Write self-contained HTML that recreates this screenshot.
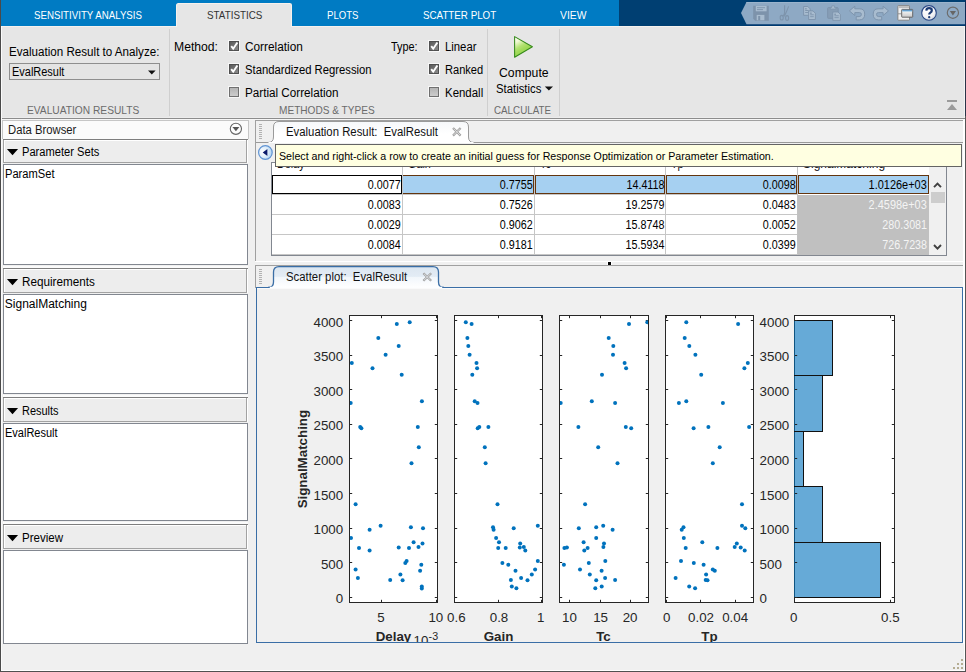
<!DOCTYPE html>
<html><head><meta charset="utf-8"><title>Sensitivity Analysis</title>
<style>
html,body{margin:0;padding:0;}
body{width:966px;height:672px;overflow:hidden;background:#f0f0f0;position:relative;font-family:"Liberation Sans",sans-serif;}
div{box-sizing:border-box;}
svg{position:absolute;left:0;top:0;overflow:visible;}
</style></head><body>
<div style="position:absolute;left:0px;top:0px;width:619px;height:26px;background:#007bc3;"></div>
<div style="position:absolute;left:619px;top:0px;width:347px;height:26px;background:#003f72;"></div>
<div style="position:absolute;left:746px;top:24px;width:220px;height:2px;background:#003a70;"></div>
<div style="position:absolute;left:0px;top:26px;width:966px;height:92px;background:#e6e6e6;"></div>
<div style="position:absolute;left:0px;top:26px;width:966px;height:1px;background:#f5f1ee;"></div>
<div style="position:absolute;left:176px;top:3px;width:116px;height:24px;background:#e6e6e6;border-radius:2.5px 2.5px 0 0;border:1px solid #f7f1ec;border-bottom:none;"></div>
<div style="position:absolute;top:8.19px;height:15px;line-height:15px;font-size:11px;color:#fff;white-space:pre;left:33.50px;transform-origin:0 50%;transform:scaleX(0.8818);">SENSITIVITY ANALYSIS</div>
<div style="position:absolute;top:8.19px;height:15px;line-height:15px;font-size:11px;color:#333;white-space:pre;left:206.50px;transform-origin:0 50%;transform:scaleX(0.8945);">STATISTICS</div>
<div style="position:absolute;top:8.19px;height:15px;line-height:15px;font-size:11px;color:#fff;white-space:pre;left:326.50px;transform-origin:0 50%;transform:scaleX(0.8734);">PLOTS</div>
<div style="position:absolute;top:8.19px;height:15px;line-height:15px;font-size:11px;color:#fff;white-space:pre;left:422.50px;transform-origin:0 50%;transform:scaleX(0.8893);">SCATTER PLOT</div>
<div style="position:absolute;top:8.19px;height:15px;line-height:15px;font-size:11px;color:#fff;white-space:pre;left:560.30px;transform-origin:0 50%;transform:scaleX(0.9391);">VIEW</div>
<svg width="966" height="30"><path d="M741 13 L746.5 2 H965 V24.2 H746.5 Z" fill="#8ea9c4"/></svg>
<div style="position:absolute;top:44.04px;height:17px;line-height:17px;font-size:12px;color:#000;white-space:pre;left:9.30px;transform-origin:0 50%;transform:scaleX(0.9676);">Evaluation Result to Analyze:</div>
<div style="position:absolute;left:9px;top:63px;width:151px;height:17px;background:#e4e4e4;border:1px solid #8e8e8e;"></div>
<div style="position:absolute;top:64.14px;height:17px;line-height:17px;font-size:12px;color:#000;white-space:pre;left:12.30px;transform-origin:0 50%;transform:scaleX(0.9135);">EvalResult</div>
<svg width="966" height="130"><path d="M148 70.6 h7.6 l-3.8 3.8 z" fill="#111"/></svg>
<div style="position:absolute;top:103.29px;height:15px;line-height:15px;font-size:11px;color:#6b6b6b;white-space:pre;left:26.50px;transform-origin:0 50%;transform:scaleX(0.9279);">EVALUATION RESULTS</div>
<div style="position:absolute;top:103.29px;height:15px;line-height:15px;font-size:11px;color:#6b6b6b;white-space:pre;left:278.80px;transform-origin:0 50%;transform:scaleX(0.9174);">METHODS &amp; TYPES</div>
<div style="position:absolute;top:103.29px;height:15px;line-height:15px;font-size:11px;color:#6b6b6b;white-space:pre;left:493.70px;transform-origin:0 50%;transform:scaleX(0.8909);">CALCULATE</div>
<div style="position:absolute;left:169px;top:29px;width:1px;height:87px;background:#cfcfcf;"></div>
<div style="position:absolute;left:487px;top:29px;width:1px;height:87px;background:#cfcfcf;"></div>
<div style="position:absolute;left:559px;top:29px;width:1px;height:87px;background:#cfcfcf;"></div>
<div style="position:absolute;top:39.24px;height:17px;line-height:17px;font-size:12px;color:#000;white-space:pre;left:173.70px;transform-origin:0 50%;transform:scaleX(1.0148);">Method:</div>
<div style="position:absolute;top:39.24px;height:17px;line-height:17px;font-size:12px;color:#000;white-space:pre;left:390.80px;transform-origin:0 50%;transform:scaleX(0.9063);">Type:</div>
<div style="position:absolute;left:229px;top:41px;width:10px;height:10px;background:linear-gradient(135deg,#5c5c5c,#8a8a8a);border:1px solid #505050;box-shadow:0 0 0 1px #f7f7f7;"></div>
<svg width="966" height="130"><path d="M231.2 46.2 l2 2.5 l4.2 -6.2" fill="none" stroke="#fff" stroke-width="1.9"/></svg>
<div style="position:absolute;left:229px;top:64px;width:10px;height:10px;background:linear-gradient(135deg,#5c5c5c,#8a8a8a);border:1px solid #505050;box-shadow:0 0 0 1px #f7f7f7;"></div>
<svg width="966" height="130"><path d="M231.2 69.2 l2 2.5 l4.2 -6.2" fill="none" stroke="#fff" stroke-width="1.9"/></svg>
<div style="position:absolute;left:229px;top:87px;width:10px;height:10px;background:linear-gradient(#b4b4b4,#cdcdcd);border:1px solid #707070;box-shadow:0 0 0 1px #f7f7f7;"></div>
<div style="position:absolute;left:429px;top:41px;width:10px;height:10px;background:linear-gradient(135deg,#5c5c5c,#8a8a8a);border:1px solid #505050;box-shadow:0 0 0 1px #f7f7f7;"></div>
<svg width="966" height="130"><path d="M431.2 46.2 l2 2.5 l4.2 -6.2" fill="none" stroke="#fff" stroke-width="1.9"/></svg>
<div style="position:absolute;left:429px;top:64px;width:10px;height:10px;background:linear-gradient(135deg,#5c5c5c,#8a8a8a);border:1px solid #505050;box-shadow:0 0 0 1px #f7f7f7;"></div>
<svg width="966" height="130"><path d="M431.2 69.2 l2 2.5 l4.2 -6.2" fill="none" stroke="#fff" stroke-width="1.9"/></svg>
<div style="position:absolute;left:429px;top:87px;width:10px;height:10px;background:linear-gradient(#b4b4b4,#cdcdcd);border:1px solid #707070;box-shadow:0 0 0 1px #f7f7f7;"></div>
<div style="position:absolute;top:39.34px;height:17px;line-height:17px;font-size:12px;color:#000;white-space:pre;left:244.80px;transform-origin:0 50%;transform:scaleX(0.9847);">Correlation</div>
<div style="position:absolute;top:62.14px;height:17px;line-height:17px;font-size:12px;color:#000;white-space:pre;left:244.80px;transform-origin:0 50%;transform:scaleX(0.9395);">Standardized Regression</div>
<div style="position:absolute;top:85.04px;height:17px;line-height:17px;font-size:12px;color:#000;white-space:pre;left:244.80px;transform-origin:0 50%;transform:scaleX(0.9735);">Partial Correlation</div>
<div style="position:absolute;top:39.34px;height:17px;line-height:17px;font-size:12px;color:#000;white-space:pre;left:444.50px;transform-origin:0 50%;transform:scaleX(0.9443);">Linear</div>
<div style="position:absolute;top:62.14px;height:17px;line-height:17px;font-size:12px;color:#000;white-space:pre;left:444.50px;transform-origin:0 50%;transform:scaleX(0.9235);">Ranked</div>
<div style="position:absolute;top:85.04px;height:17px;line-height:17px;font-size:12px;color:#000;white-space:pre;left:444.50px;transform-origin:0 50%;transform:scaleX(0.9542);">Kendall</div>
<svg width="966" height="130"><defs><linearGradient id="pg" x1="0" y1="0" x2="0.55" y2="1"><stop offset="0" stop-color="#ffffff"/><stop offset="0.25" stop-color="#f0f9d2"/><stop offset="0.5" stop-color="#b4e272"/><stop offset="0.65" stop-color="#a2db5a"/><stop offset="1" stop-color="#8fd046"/></linearGradient></defs>
<path d="M514.6 36.6 L532.4 46.8 L514.6 57.2 Z" fill="url(#pg)" stroke="#358a1a" stroke-width="1.05" stroke-linejoin="round"/>
<path d="M544.8 86.6 h8.2 l-4.1 3.8 z" fill="#111"/>
<path d="M947 100 h10 v2 h-10 z M952 104 l5 6 h-10 z" fill="#9b9b9b"/>
</svg>
<div style="position:absolute;top:65.14px;height:17px;line-height:17px;font-size:12px;color:#000;white-space:pre;left:498.60px;transform-origin:0 50%;transform:scaleX(1.0186);">Compute</div>
<div style="position:absolute;top:80.84px;height:17px;line-height:17px;font-size:12px;color:#000;white-space:pre;left:496.40px;transform-origin:0 50%;transform:scaleX(0.9435);">Statistics</div>
<div style="position:absolute;left:0px;top:117px;width:966px;height:1px;background:#ececec;"></div>
<div style="position:absolute;left:0px;top:118px;width:966px;height:1px;background:#8c8c8c;"></div>
<div style="position:absolute;left:0px;top:119px;width:966px;height:1px;background:#f6f6f6;"></div>
<svg width="966" height="30">
<path d="M746.5 2.5 H965" stroke="#9bb4cc" stroke-width="1"/>
<path d="M753.2 5.8 H768.8 V20.8 H755.2 L753.2 18.8 Z" fill="#7d93ab"/>
<rect x="755.8" y="5.9" width="10.8" height="5.4" fill="#a8bccf"/>
<path d="M757 7.7 H765 M757 9.6 H763" stroke="#7d93ab" stroke-width="0.9"/>
<rect x="756.7" y="14.9" width="7.7" height="5.4" fill="#a8bccf"/>
<rect x="758.2" y="16" width="2" height="4.2" fill="#7d93ab"/>
<path d="M784.6 5.3 V12.5 Q784.4 15 782.6 16.2 M788.6 6.4 Q786.5 12 785.2 14.5 L784.4 16.4" fill="none" stroke="#7d93ab" stroke-width="1.1"/>
<ellipse cx="781.7" cy="17.7" rx="1.55" ry="2.3" fill="none" stroke="#7d93ab" stroke-width="1.1"/>
<ellipse cx="787.1" cy="18.0" rx="1.55" ry="2.4" fill="none" stroke="#7d93ab" stroke-width="1.1"/>
<path d="M803.6 6.5 H807.8000000000001 L810.2 8.9 V15.3 H803.6 Z" fill="#a8bccf" stroke="#7d93ab" stroke-width="0.9"/>
<path d="M805.2 10.5 H808.6 M805.2 12.5 H808.6" stroke="#7d93ab" stroke-width="0.9"/>
<rect x="805.2" y="8.1" width="1.4" height="1.4" fill="#7d93ab"/>
<path d="M808.6 10.9 H813.0 L815.4 13.3 V19.5 H808.6 Z" fill="#a8bccf" stroke="#7d93ab" stroke-width="0.9"/>
<path d="M810.2 14.8 H813.8 M810.2 16.7 H813.8" stroke="#7d93ab" stroke-width="0.9"/>
<rect x="810.2" y="12.5" width="1.4" height="1.4" fill="#7d93ab"/>
<rect x="827.6" y="7.6" width="10.6" height="10.8" rx="0.8" fill="#869db5" stroke="#7d93ab" stroke-width="0.9"/>
<path d="M830.4 9 V7.4 H831.8 V5.8 H834.4 V7.4 H835.8 V9 Z" fill="#a8bccf" stroke="#7d93ab" stroke-width="0.7"/>
<path d="M832.8 12.0 H838.0 L840.4 14.4 V20.4 H832.8 Z" fill="#a8bccf" stroke="#7d93ab" stroke-width="0.9"/>
<path d="M834.4 15.8 H838.8 M834.4 17.7 H838.8" stroke="#7d93ab" stroke-width="0.9"/>
<rect x="834.4" y="13.6" width="1.4" height="1.4" fill="#7d93ab"/>
<path d="M849.4 10.9 L854.8 6.2 V8.8 H859.8 Q864.7 8.8 864.7 14.2 Q864.7 19.9 859.4 19.9 H856.2 V16.6 H859.2 Q861.4 16.6 861.4 14.3 Q861.4 12.6 859.4 12.6 H854.8 V15.5 Z" fill="#a8bccf" stroke="#7d94ad" stroke-width="1" stroke-linejoin="round"/>
<g transform="translate(1737.9,0) scale(-1,1)"><path d="M849.4 10.9 L854.8 6.2 V8.8 H859.8 Q864.7 8.8 864.7 14.2 Q864.7 19.9 859.4 19.9 H856.2 V16.6 H859.2 Q861.4 16.6 861.4 14.3 Q861.4 12.6 859.4 12.6 H854.8 V15.5 Z" fill="#a8bccf" stroke="#7d94ad" stroke-width="1" stroke-linejoin="round"/></g>
<defs><linearGradient id="wg" x1="0" y1="0" x2="0" y2="1"><stop offset="0" stop-color="#ffffff"/><stop offset="1" stop-color="#c9c9c9"/></linearGradient><linearGradient id="wt" x1="0" y1="0" x2="0" y2="1"><stop offset="0" stop-color="#3f7fb8"/><stop offset="1" stop-color="#a6d3ee"/></linearGradient><radialGradient id="hg" cx="0.4" cy="0.3" r="0.8"><stop offset="0" stop-color="#ffffff"/><stop offset="0.6" stop-color="#f4f4f6"/><stop offset="1" stop-color="#c4c8d2"/></radialGradient></defs>
<rect x="897.9" y="5.6" width="11.6" height="14.6" rx="0.6" fill="#f0f0f0" stroke="#7e7e7e" stroke-width="0.9"/>
<rect x="898.4" y="6.1" width="10.6" height="2" fill="#bcbcbc"/>
<path d="M898 13.8 H901.5" stroke="#8a8a8a" stroke-width="0.9"/>
<rect x="901.7" y="9.4" width="11" height="7.8" rx="0.5" fill="url(#wg)" stroke="#5a5a5a" stroke-width="0.9"/>
<rect x="902.2" y="9.8" width="10" height="1.9" fill="url(#wt)"/>
<circle cx="929" cy="12.9" r="7.3" fill="url(#hg)" stroke="#2a4886" stroke-width="1.1"/>
<path d="M926.3 10.6 Q926.4 8.2 929.1 8.2 Q931.8 8.2 931.8 10.4 Q931.8 11.7 930.4 12.6 Q929.2 13.4 929.2 14.6" fill="none" stroke="#1d3c75" stroke-width="2.2"/>
<circle cx="929.2" cy="17.2" r="1.15" fill="#1d3c75"/>
<circle cx="952.9" cy="12.7" r="5.6" fill="none" stroke="#6c6c6c" stroke-width="1.2"/>
<path d="M949.8 11.1 H956 L952.9 15.4 Z" fill="#666"/>
</svg>
<div style="position:absolute;left:0px;top:0px;width:1px;height:672px;background:#4a4a4a;"></div>
<div style="position:absolute;left:1px;top:26px;width:1px;height:646px;background:#fbfbfb;"></div>
<div style="position:absolute;left:965px;top:0px;width:1px;height:26px;background:#0d2a55;"></div>
<div style="position:absolute;left:965px;top:26px;width:1px;height:90px;background:#2a3448;"></div>
<div style="position:absolute;left:965px;top:116px;width:1px;height:556px;background:#555;"></div>
<div style="position:absolute;left:963px;top:120px;width:1px;height:524px;background:#fff;"></div>
<div style="position:absolute;left:964px;top:119px;width:1px;height:552px;background:#fff;"></div>
<div style="position:absolute;left:964px;top:27px;width:1px;height:91px;background:#f4f4f4;"></div>
<div style="position:absolute;left:0px;top:671px;width:966px;height:1px;background:#505050;"></div>
<div style="position:absolute;left:1px;top:670px;width:964px;height:1px;background:#fff;"></div>
<div style="position:absolute;left:2px;top:120px;width:247px;height:19px;background:#fbfbfb;border:1px solid #c6c6c6;"></div>
<div style="position:absolute;top:121.84px;height:17px;line-height:17px;font-size:12px;color:#1a1a1a;white-space:pre;left:8.00px;transform-origin:0 50%;transform:scaleX(0.9396);">Data Browser</div>
<svg width="966" height="672"><circle cx="235.9" cy="128.8" r="5.6" fill="#fdfdfd" stroke="#666" stroke-width="1.1"/><path d="M232.4 127 h7 l-3.5 4.3 z" fill="#555"/></svg>
<div style="position:absolute;left:3px;top:137px;width:245px;height:2px;background:#fbfbfb;"></div>
<div style="position:absolute;left:3px;top:139px;width:245px;height:24px;background:#fff;"></div>
<div style="position:absolute;left:3px;top:139px;width:245px;height:1px;background:#7e7e7e;"></div>
<div style="position:absolute;left:3px;top:140px;width:1px;height:23px;background:#a2a2a2;"></div>
<div style="position:absolute;left:5px;top:141px;width:241px;height:21px;background:#ededed;"></div>
<div style="position:absolute;left:246px;top:140px;width:1px;height:23px;background:#a2a2a2;"></div>
<div style="position:absolute;left:3px;top:162px;width:244px;height:1px;background:#a2a2a2;"></div>
<svg width="966" height="672"><path d="M6.9 149 h11.2 l-5.6 6.3 z" fill="#000"/></svg>
<div style="position:absolute;top:143.84px;height:17px;line-height:17px;font-size:12px;color:#000;white-space:pre;left:21.90px;transform-origin:0 50%;transform:scaleX(0.9272);">Parameter Sets</div>
<div style="position:absolute;left:3px;top:164px;width:245px;height:101px;background:#fff;border:1px solid #828790;"></div>
<div style="position:absolute;top:166.34px;height:17px;line-height:17px;font-size:12px;color:#000;white-space:pre;left:4.80px;transform-origin:0 50%;transform:scaleX(0.9277);">ParamSet</div>
<div style="position:absolute;left:3px;top:266px;width:245px;height:2px;background:#fbfbfb;"></div>
<div style="position:absolute;left:3px;top:268px;width:245px;height:25px;background:#fff;"></div>
<div style="position:absolute;left:3px;top:268px;width:245px;height:1px;background:#7e7e7e;"></div>
<div style="position:absolute;left:3px;top:269px;width:1px;height:24px;background:#a2a2a2;"></div>
<div style="position:absolute;left:5px;top:270px;width:241px;height:22px;background:#ededed;"></div>
<div style="position:absolute;left:246px;top:269px;width:1px;height:24px;background:#a2a2a2;"></div>
<div style="position:absolute;left:3px;top:292px;width:244px;height:1px;background:#a2a2a2;"></div>
<svg width="966" height="672"><path d="M6.9 279 h11.2 l-5.6 6.3 z" fill="#000"/></svg>
<div style="position:absolute;top:273.84px;height:17px;line-height:17px;font-size:12px;color:#000;white-space:pre;left:21.90px;transform-origin:0 50%;transform:scaleX(0.9759);">Requirements</div>
<div style="position:absolute;left:3px;top:294px;width:245px;height:100px;background:#fff;border:1px solid #828790;"></div>
<div style="position:absolute;top:296.34px;height:17px;line-height:17px;font-size:12px;color:#000;white-space:pre;left:4.80px;transform-origin:0 50%;">SignalMatching</div>
<div style="position:absolute;left:3px;top:395px;width:245px;height:2px;background:#fbfbfb;"></div>
<div style="position:absolute;left:3px;top:397px;width:245px;height:25px;background:#fff;"></div>
<div style="position:absolute;left:3px;top:397px;width:245px;height:1px;background:#7e7e7e;"></div>
<div style="position:absolute;left:3px;top:398px;width:1px;height:24px;background:#a2a2a2;"></div>
<div style="position:absolute;left:5px;top:399px;width:241px;height:22px;background:#ededed;"></div>
<div style="position:absolute;left:246px;top:398px;width:1px;height:24px;background:#a2a2a2;"></div>
<div style="position:absolute;left:3px;top:421px;width:244px;height:1px;background:#a2a2a2;"></div>
<svg width="966" height="672"><path d="M6.9 408 h11.2 l-5.6 6.3 z" fill="#000"/></svg>
<div style="position:absolute;top:402.84px;height:17px;line-height:17px;font-size:12px;color:#000;white-space:pre;left:21.90px;transform-origin:0 50%;transform:scaleX(0.9147);">Results</div>
<div style="position:absolute;left:3px;top:423px;width:245px;height:98px;background:#fff;border:1px solid #828790;"></div>
<div style="position:absolute;top:425.34px;height:17px;line-height:17px;font-size:12px;color:#000;white-space:pre;left:4.80px;transform-origin:0 50%;transform:scaleX(0.9170);">EvalResult</div>
<div style="position:absolute;left:3px;top:522px;width:245px;height:2px;background:#fbfbfb;"></div>
<div style="position:absolute;left:3px;top:524px;width:245px;height:25px;background:#fff;"></div>
<div style="position:absolute;left:3px;top:524px;width:245px;height:1px;background:#7e7e7e;"></div>
<div style="position:absolute;left:3px;top:525px;width:1px;height:24px;background:#a2a2a2;"></div>
<div style="position:absolute;left:5px;top:526px;width:241px;height:22px;background:#ededed;"></div>
<div style="position:absolute;left:246px;top:525px;width:1px;height:24px;background:#a2a2a2;"></div>
<div style="position:absolute;left:3px;top:548px;width:244px;height:1px;background:#a2a2a2;"></div>
<svg width="966" height="672"><path d="M6.9 535 h11.2 l-5.6 6.3 z" fill="#000"/></svg>
<div style="position:absolute;top:529.84px;height:17px;line-height:17px;font-size:12px;color:#000;white-space:pre;left:21.90px;transform-origin:0 50%;transform:scaleX(0.9606);">Preview</div>
<div style="position:absolute;left:3px;top:550px;width:245px;height:94px;background:#fff;border:1px solid #828790;"></div>
<div style="position:absolute;left:255px;top:120px;width:708px;height:141px;background:#f0f0f0;border:1px solid #a0a0a0;border-right:none;border-bottom:none;"></div>
<div style="position:absolute;left:255px;top:261px;width:708px;height:1px;background:#fff;"></div>
<div style="position:absolute;left:256px;top:143px;width:707px;height:118px;background:#f0f0f0;"></div>
<div style="position:absolute;left:256px;top:142px;width:707px;height:1px;background:#999;"></div>
<div style="position:absolute;left:259px;top:124px;width:3px;height:1px;background:#b2b2b2;"></div>
<div style="position:absolute;left:259px;top:126px;width:3px;height:1px;background:#b2b2b2;"></div>
<div style="position:absolute;left:259px;top:128px;width:3px;height:1px;background:#b2b2b2;"></div>
<div style="position:absolute;left:259px;top:130px;width:3px;height:1px;background:#b2b2b2;"></div>
<div style="position:absolute;left:259px;top:132px;width:3px;height:1px;background:#b2b2b2;"></div>
<div style="position:absolute;left:259px;top:134px;width:3px;height:1px;background:#b2b2b2;"></div>
<div style="position:absolute;left:259px;top:136px;width:3px;height:1px;background:#b2b2b2;"></div>
<div style="position:absolute;left:259px;top:138px;width:3px;height:1px;background:#b2b2b2;"></div>
<svg width="966" height="672"><defs><linearGradient id="tg0" x1="0" y1="0" x2="0" y2="1"><stop offset="0" stop-color="#f6f8fa"/><stop offset="0.6" stop-color="#ffffff"/></linearGradient></defs><path d="M268.0 142.5 Q273.5 142.5 273.5 137.0 V127.0 Q273.5 121.5 279.0 121.5 H463.0 Q468.5 121.5 468.5 127.0 V137.0 Q468.5 142.5 474.0 142.5" fill="url(#tg0)" stroke="#9a9a9a" stroke-width="1"/><path d="M268.5 142.5 H473.5" stroke="#fff" stroke-width="1"/></svg>
<div style="position:absolute;top:124.34px;height:17px;line-height:17px;font-size:12px;color:#111;white-space:pre;left:286.20px;transform-origin:0 50%;transform:scaleX(0.9456);">Evaluation Result:  EvalResult</div>
<svg width="966" height="672"><path d="M453 128 l7.6 7.6 M460.6 128 l-7.6 7.6" stroke="#a2a2a2" stroke-width="2.3"/><path d="M453.6 128.6 l6.4 6.4 M460 128.6 l-6.4 6.4" stroke="#e4e4e4" stroke-width="0.8"/></svg>
<div style="position:absolute;left:272px;top:163px;width:657px;height:12px;background:#fff;"></div>
<div style="position:absolute;left:946px;top:162px;width:1px;height:94px;background:#828790;"></div>
<div style="position:absolute;left:271px;top:162px;width:676px;height:1px;background:#828790;"></div>
<div style="position:absolute;top:156.04px;height:17px;line-height:17px;font-size:12px;color:#111;white-space:pre;left:277.00px;transform-origin:0 50%;transform:scaleX(0.9000);">Delay</div>
<div style="position:absolute;top:156.04px;height:17px;line-height:17px;font-size:12px;color:#111;white-space:pre;left:408.00px;transform-origin:0 50%;transform:scaleX(0.9000);">Gain</div>
<div style="position:absolute;top:156.04px;height:17px;line-height:17px;font-size:12px;color:#111;white-space:pre;left:540.00px;transform-origin:0 50%;transform:scaleX(0.9000);">Tc</div>
<div style="position:absolute;top:156.04px;height:17px;line-height:17px;font-size:12px;color:#111;white-space:pre;left:671.00px;transform-origin:0 50%;transform:scaleX(0.9000);">Tp</div>
<div style="position:absolute;top:156.04px;height:17px;line-height:17px;font-size:12px;color:#111;white-space:pre;left:803.00px;transform-origin:0 50%;">SignalMatching</div>
<div style="position:absolute;left:272px;top:175px;width:657px;height:80px;background:#fff;"></div>
<div style="position:absolute;left:929px;top:163px;width:17px;height:92px;background:#f0f0f0;"></div>
<div style="position:absolute;left:798px;top:195px;width:131px;height:60px;background:#c0c0c0;"></div>
<div style="position:absolute;left:272px;top:194px;width:526px;height:1px;background:#c6c6c6;"></div>
<div style="position:absolute;left:272px;top:214px;width:526px;height:1px;background:#c6c6c6;"></div>
<div style="position:absolute;left:272px;top:234px;width:526px;height:1px;background:#c6c6c6;"></div>
<div style="position:absolute;left:402px;top:163px;width:1px;height:91px;background:#c6c6c6;"></div>
<div style="position:absolute;left:534px;top:163px;width:1px;height:91px;background:#c6c6c6;"></div>
<div style="position:absolute;left:665px;top:163px;width:1px;height:91px;background:#c6c6c6;"></div>
<div style="position:absolute;left:797px;top:163px;width:1px;height:91px;background:#c2c2c2;"></div>
<div style="position:absolute;left:272px;top:254px;width:526px;height:1px;background:#c6c6c6;"></div>
<div style="position:absolute;left:271px;top:162px;width:1px;height:94px;background:#828790;"></div>
<div style="position:absolute;left:271px;top:255px;width:676px;height:1px;background:#828790;"></div>
<div style="position:absolute;left:403px;top:175px;width:131px;height:19px;background:#a6d0f1;border:1px solid #63350f;border-left:none;"></div>
<div style="position:absolute;left:535px;top:175px;width:130px;height:19px;background:#a6d0f1;border:1px solid #63350f;"></div>
<div style="position:absolute;left:666px;top:175px;width:131px;height:19px;background:#a6d0f1;border:1px solid #63350f;"></div>
<div style="position:absolute;left:798px;top:175px;width:131px;height:19px;background:#a6d0f1;border:1px solid #63350f;"></div>
<div style="position:absolute;left:272px;top:175px;width:130px;height:19px;background:#fff;border:1px solid #000;"></div>
<div style="position:absolute;top:177.14px;height:17px;line-height:17px;font-size:12px;color:#000;white-space:pre;right:564.90px;transform-origin:100% 50%;transform:scaleX(0.8950);">0.0077</div>
<div style="position:absolute;top:177.14px;height:17px;line-height:17px;font-size:12px;color:#000;white-space:pre;right:432.90px;transform-origin:100% 50%;transform:scaleX(0.8950);">0.7755</div>
<div style="position:absolute;top:177.14px;height:17px;line-height:17px;font-size:12px;color:#000;white-space:pre;right:301.90px;transform-origin:100% 50%;transform:scaleX(0.8950);">14.4118</div>
<div style="position:absolute;top:177.14px;height:17px;line-height:17px;font-size:12px;color:#000;white-space:pre;right:169.90px;transform-origin:100% 50%;transform:scaleX(0.8950);">0.0098</div>
<div style="position:absolute;top:177.14px;height:17px;line-height:17px;font-size:12px;color:#000;white-space:pre;right:39.20px;transform-origin:100% 50%;transform:scaleX(0.9120);">1.0126e+03</div>
<div style="position:absolute;top:197.14px;height:17px;line-height:17px;font-size:12px;color:#000;white-space:pre;right:564.90px;transform-origin:100% 50%;transform:scaleX(0.8950);">0.0083</div>
<div style="position:absolute;top:197.14px;height:17px;line-height:17px;font-size:12px;color:#000;white-space:pre;right:432.90px;transform-origin:100% 50%;transform:scaleX(0.8950);">0.7526</div>
<div style="position:absolute;top:197.14px;height:17px;line-height:17px;font-size:12px;color:#000;white-space:pre;right:301.90px;transform-origin:100% 50%;transform:scaleX(0.8950);">19.2579</div>
<div style="position:absolute;top:197.14px;height:17px;line-height:17px;font-size:12px;color:#000;white-space:pre;right:169.90px;transform-origin:100% 50%;transform:scaleX(0.8950);">0.0483</div>
<div style="position:absolute;top:197.14px;height:17px;line-height:17px;font-size:12px;color:#f4f4f4;white-space:pre;right:39.20px;transform-origin:100% 50%;transform:scaleX(0.9120);">2.4598e+03</div>
<div style="position:absolute;top:217.14px;height:17px;line-height:17px;font-size:12px;color:#000;white-space:pre;right:564.90px;transform-origin:100% 50%;transform:scaleX(0.8950);">0.0029</div>
<div style="position:absolute;top:217.14px;height:17px;line-height:17px;font-size:12px;color:#000;white-space:pre;right:432.90px;transform-origin:100% 50%;transform:scaleX(0.8950);">0.9062</div>
<div style="position:absolute;top:217.14px;height:17px;line-height:17px;font-size:12px;color:#000;white-space:pre;right:301.90px;transform-origin:100% 50%;transform:scaleX(0.8950);">15.8748</div>
<div style="position:absolute;top:217.14px;height:17px;line-height:17px;font-size:12px;color:#000;white-space:pre;right:169.90px;transform-origin:100% 50%;transform:scaleX(0.8950);">0.0052</div>
<div style="position:absolute;top:217.14px;height:17px;line-height:17px;font-size:12px;color:#f4f4f4;white-space:pre;right:39.20px;transform-origin:100% 50%;transform:scaleX(0.8950);">280.3081</div>
<div style="position:absolute;top:237.14px;height:17px;line-height:17px;font-size:12px;color:#000;white-space:pre;right:564.90px;transform-origin:100% 50%;transform:scaleX(0.8950);">0.0084</div>
<div style="position:absolute;top:237.14px;height:17px;line-height:17px;font-size:12px;color:#000;white-space:pre;right:432.90px;transform-origin:100% 50%;transform:scaleX(0.8950);">0.9181</div>
<div style="position:absolute;top:237.14px;height:17px;line-height:17px;font-size:12px;color:#000;white-space:pre;right:301.90px;transform-origin:100% 50%;transform:scaleX(0.8950);">15.5934</div>
<div style="position:absolute;top:237.14px;height:17px;line-height:17px;font-size:12px;color:#000;white-space:pre;right:169.90px;transform-origin:100% 50%;transform:scaleX(0.8950);">0.0399</div>
<div style="position:absolute;top:237.14px;height:17px;line-height:17px;font-size:12px;color:#f4f4f4;white-space:pre;right:39.20px;transform-origin:100% 50%;transform:scaleX(0.8950);">726.7238</div>
<div style="position:absolute;left:931px;top:192px;width:14px;height:11px;background:#cdcdcd;"></div>
<svg width="966" height="672"><path d="M934 187.2 l3.5 -3.6 l3.5 3.6 M934 245 l3.5 3.6 l3.5 -3.6" fill="none" stroke="#404040" stroke-width="1.9"/></svg>
<div style="position:absolute;left:275px;top:144px;width:687px;height:23px;background:#ffffe1;border:1px solid #646464;"></div>
<div style="position:absolute;top:148.73px;height:15px;line-height:15px;font-size:10.6px;color:#000;white-space:pre;left:278.60px;transform-origin:0 50%;transform:scaleX(1.0062);">Select and right-click a row to create an initial guess for Response Optimization or Parameter Estimation.</div>
<div style="position:absolute;left:607px;top:261px;width:5px;height:5px;background:#fff;"></div>
<div style="position:absolute;left:608px;top:262px;width:3px;height:3px;background:#000;"></div>
<svg width="966" height="672"><defs><radialGradient id="bg1" cx="0.3" cy="0.45" r="0.75"><stop offset="0" stop-color="#ffffff"/><stop offset="0.55" stop-color="#dcecf9"/><stop offset="1" stop-color="#a6cdee"/></radialGradient></defs>
<circle cx="265.4" cy="152.5" r="6.8" fill="url(#bg1)" stroke="#5f93d3" stroke-width="1.2"/><path d="M267.4 148.9 v7.2 l-4.7 -3.6 z" fill="#0a1a6a"/></svg>
<div style="position:absolute;left:255px;top:265px;width:708px;height:1px;background:#a0a0a0;"></div>
<div style="position:absolute;left:255px;top:265px;width:1px;height:23px;background:#a0a0a0;"></div>
<div style="position:absolute;left:259px;top:269px;width:3px;height:1px;background:#b2b2b2;"></div>
<div style="position:absolute;left:259px;top:271px;width:3px;height:1px;background:#b2b2b2;"></div>
<div style="position:absolute;left:259px;top:273px;width:3px;height:1px;background:#b2b2b2;"></div>
<div style="position:absolute;left:259px;top:275px;width:3px;height:1px;background:#b2b2b2;"></div>
<div style="position:absolute;left:259px;top:277px;width:3px;height:1px;background:#b2b2b2;"></div>
<div style="position:absolute;left:259px;top:279px;width:3px;height:1px;background:#b2b2b2;"></div>
<div style="position:absolute;left:259px;top:281px;width:3px;height:1px;background:#b2b2b2;"></div>
<div style="position:absolute;left:259px;top:283px;width:3px;height:1px;background:#b2b2b2;"></div>
<div style="position:absolute;left:256px;top:287px;width:707px;height:356px;background:#f0f0f0;border:1px solid #3a6ea6;"></div>
<svg width="966" height="672"><defs><linearGradient id="tg" x1="0" y1="0" x2="0" y2="1"><stop offset="0" stop-color="#dce6f0"/><stop offset="0.47" stop-color="#e3ecf5"/><stop offset="0.5" stop-color="#f1f6fb"/><stop offset="1" stop-color="#ffffff"/></linearGradient></defs>
<path d="M268.0 287.5 Q273.5 287.5 273.5 282.0 V272.1 Q273.5 266.6 279.0 266.6 H433.0 Q438.5 266.6 438.5 272.1 V282.0 Q438.5 287.5 444.0 287.5" fill="url(#tg)" stroke="#3a6ea6" stroke-width="1.3"/><path d="M269.8 287.6 H442.2" stroke="#fdfeff" stroke-width="1.5"/></svg>
<div style="position:absolute;left:257px;top:288px;width:705px;height:1px;background:#fafafa;"></div>
<div style="position:absolute;top:268.94px;height:17px;line-height:17px;font-size:12px;color:#111;white-space:pre;left:286.20px;transform-origin:0 50%;transform:scaleX(0.9457);">Scatter plot:  EvalResult</div>
<svg width="966" height="672"><path d="M423.4 273.2 l7.8 7.6 M431.2 273.2 l-7.8 7.6" stroke="#a2a2a2" stroke-width="2.3"/><path d="M424 273.8 l6.6 6.4 M430.6 273.8 l-6.6 6.4" stroke="#e4e8ee" stroke-width="0.8"/></svg>
<div style="position:absolute;left:962px;top:668px;width:1px;height:1px;background:#fff;"></div>
<div style="position:absolute;left:961px;top:667px;width:2px;height:2px;background:#b5ad93;"></div>
<div style="position:absolute;left:958px;top:668px;width:1px;height:1px;background:#fff;"></div>
<div style="position:absolute;left:957px;top:667px;width:2px;height:2px;background:#b5ad93;"></div>
<div style="position:absolute;left:954px;top:668px;width:1px;height:1px;background:#fff;"></div>
<div style="position:absolute;left:953px;top:667px;width:2px;height:2px;background:#b5ad93;"></div>
<div style="position:absolute;left:962px;top:664px;width:1px;height:1px;background:#fff;"></div>
<div style="position:absolute;left:961px;top:663px;width:2px;height:2px;background:#b5ad93;"></div>
<div style="position:absolute;left:958px;top:664px;width:1px;height:1px;background:#fff;"></div>
<div style="position:absolute;left:957px;top:663px;width:2px;height:2px;background:#b5ad93;"></div>
<div style="position:absolute;left:962px;top:660px;width:1px;height:1px;background:#fff;"></div>
<div style="position:absolute;left:961px;top:659px;width:2px;height:2px;background:#b5ad93;"></div>
<svg width="966" height="672">
<rect x="349.5" y="315.5" width="88" height="287" fill="#fff" stroke="none"/>
<path d="M350 597.5h2.2M437 597.5h-2.2M350 562.5h2.2M437 562.5h-2.2M350 528.5h2.2M437 528.5h-2.2M350 493.5h2.2M437 493.5h-2.2M350 458.5h2.2M437 458.5h-2.2M350 424.5h2.2M437 424.5h-2.2M350 389.5h2.2M437 389.5h-2.2M350 355.5h2.2M437 355.5h-2.2M350 320.5h2.2M437 320.5h-2.2M381.5 316v2.2M381.5 602v-2.2M436.5 316v2.2M436.5 602v-2.2" stroke="#262626" stroke-width="1" fill="none"/>
<clipPath id="cp0"><rect x="349.5" y="315.5" width="88" height="287"/></clipPath><g clip-path="url(#cp0)" fill="#0072bd">
<circle cx="409.7" cy="322.3" r="2.0"/>
<circle cx="396.8" cy="324.1" r="2.0"/>
<circle cx="378.3" cy="338.0" r="2.0"/>
<circle cx="398.7" cy="346.1" r="2.0"/>
<circle cx="385.6" cy="354.7" r="2.0"/>
<circle cx="351.8" cy="363.0" r="2.0"/>
<circle cx="372.5" cy="368.3" r="2.0"/>
<circle cx="401.7" cy="374.8" r="2.0"/>
<circle cx="350.7" cy="402.9" r="2.0"/>
<circle cx="421.9" cy="401.3" r="2.0"/>
<circle cx="360.2" cy="426.9" r="2.0"/>
<circle cx="361.4" cy="428.3" r="2.0"/>
<circle cx="417.8" cy="427.1" r="2.0"/>
<circle cx="418.8" cy="447.3" r="2.0"/>
<circle cx="411.5" cy="463.2" r="2.0"/>
<circle cx="355.6" cy="504.3" r="2.0"/>
<circle cx="380.6" cy="525.7" r="2.0"/>
<circle cx="369.6" cy="529.7" r="2.0"/>
<circle cx="410.9" cy="527.2" r="2.0"/>
<circle cx="423.0" cy="528.2" r="2.0"/>
<circle cx="351.0" cy="538.1" r="2.0"/>
<circle cx="413.6" cy="542.2" r="2.0"/>
<circle cx="422.5" cy="543.4" r="2.0"/>
<circle cx="359.0" cy="547.9" r="2.0"/>
<circle cx="369.6" cy="550.4" r="2.0"/>
<circle cx="398.7" cy="547.4" r="2.0"/>
<circle cx="409.0" cy="547.9" r="2.0"/>
<circle cx="418.5" cy="547.0" r="2.0"/>
<circle cx="406.6" cy="561.0" r="2.0"/>
<circle cx="405.3" cy="562.9" r="2.0"/>
<circle cx="421.3" cy="564.7" r="2.0"/>
<circle cx="355.6" cy="569.6" r="2.0"/>
<circle cx="420.1" cy="570.7" r="2.0"/>
<circle cx="400.4" cy="574.4" r="2.0"/>
<circle cx="357.9" cy="577.9" r="2.0"/>
<circle cx="390.2" cy="579.9" r="2.0"/>
<circle cx="402.6" cy="580.2" r="2.0"/>
<circle cx="421.8" cy="586.4" r="2.0"/>
<circle cx="421.8" cy="588.5" r="2.0"/>
</g>
<rect x="349.5" y="315.5" width="88" height="287" fill="none" stroke="#262626" stroke-width="1" shape-rendering="crispEdges"/>
<rect x="454.5" y="315.5" width="88" height="287" fill="#fff" stroke="none"/>
<path d="M455 597.5h2.2M542 597.5h-2.2M455 562.5h2.2M542 562.5h-2.2M455 528.5h2.2M542 528.5h-2.2M455 493.5h2.2M542 493.5h-2.2M455 458.5h2.2M542 458.5h-2.2M455 424.5h2.2M542 424.5h-2.2M455 389.5h2.2M542 389.5h-2.2M455 355.5h2.2M542 355.5h-2.2M455 320.5h2.2M542 320.5h-2.2M454.5 316v2.2M454.5 602v-2.2M498.5 316v2.2M498.5 602v-2.2M541.5 316v2.2M541.5 602v-2.2" stroke="#262626" stroke-width="1" fill="none"/>
<clipPath id="cp1"><rect x="454.5" y="315.5" width="88" height="287"/></clipPath><g clip-path="url(#cp1)" fill="#0072bd">
<circle cx="465.8" cy="322.3" r="2.0"/>
<circle cx="471.6" cy="324.1" r="2.0"/>
<circle cx="467.4" cy="338.0" r="2.0"/>
<circle cx="468.3" cy="346.1" r="2.0"/>
<circle cx="469.6" cy="354.7" r="2.0"/>
<circle cx="476.5" cy="363.0" r="2.0"/>
<circle cx="477.1" cy="368.3" r="2.0"/>
<circle cx="472.3" cy="374.8" r="2.0"/>
<circle cx="474.7" cy="401.3" r="2.0"/>
<circle cx="477.5" cy="402.9" r="2.0"/>
<circle cx="479.3" cy="426.9" r="2.0"/>
<circle cx="477.7" cy="428.3" r="2.0"/>
<circle cx="488.4" cy="427.1" r="2.0"/>
<circle cx="484.8" cy="447.3" r="2.0"/>
<circle cx="485.6" cy="463.2" r="2.0"/>
<circle cx="497.5" cy="504.3" r="2.0"/>
<circle cx="537.8" cy="525.7" r="2.0"/>
<circle cx="493.0" cy="527.2" r="2.0"/>
<circle cx="513.7" cy="528.2" r="2.0"/>
<circle cx="493.6" cy="529.7" r="2.0"/>
<circle cx="496.1" cy="538.1" r="2.0"/>
<circle cx="499.0" cy="542.2" r="2.0"/>
<circle cx="520.2" cy="543.4" r="2.0"/>
<circle cx="498.2" cy="547.9" r="2.0"/>
<circle cx="505.7" cy="547.9" r="2.0"/>
<circle cx="519.8" cy="547.4" r="2.0"/>
<circle cx="523.8" cy="547.0" r="2.0"/>
<circle cx="525.3" cy="550.4" r="2.0"/>
<circle cx="537.8" cy="561.0" r="2.0"/>
<circle cx="502.4" cy="562.9" r="2.0"/>
<circle cx="508.3" cy="564.7" r="2.0"/>
<circle cx="535.1" cy="569.6" r="2.0"/>
<circle cx="515.5" cy="570.7" r="2.0"/>
<circle cx="531.8" cy="574.4" r="2.0"/>
<circle cx="521.1" cy="577.9" r="2.0"/>
<circle cx="510.9" cy="579.9" r="2.0"/>
<circle cx="527.5" cy="580.2" r="2.0"/>
<circle cx="511.8" cy="586.4" r="2.0"/>
<circle cx="516.4" cy="588.2" r="2.0"/>
</g>
<rect x="454.5" y="315.5" width="88" height="287" fill="none" stroke="#262626" stroke-width="1" shape-rendering="crispEdges"/>
<rect x="559.5" y="315.5" width="89" height="287" fill="#fff" stroke="none"/>
<path d="M560 597.5h2.2M648 597.5h-2.2M560 562.5h2.2M648 562.5h-2.2M560 528.5h2.2M648 528.5h-2.2M560 493.5h2.2M648 493.5h-2.2M560 458.5h2.2M648 458.5h-2.2M560 424.5h2.2M648 424.5h-2.2M560 389.5h2.2M648 389.5h-2.2M560 355.5h2.2M648 355.5h-2.2M560 320.5h2.2M648 320.5h-2.2M569.5 316v2.2M569.5 602v-2.2M600.5 316v2.2M600.5 602v-2.2M630.5 316v2.2M630.5 602v-2.2" stroke="#262626" stroke-width="1" fill="none"/>
<clipPath id="cp2"><rect x="559.5" y="315.5" width="89" height="287"/></clipPath><g clip-path="url(#cp2)" fill="#0072bd">
<circle cx="647.3" cy="322.3" r="2.0"/>
<circle cx="629.0" cy="324.1" r="2.0"/>
<circle cx="608.7" cy="338.0" r="2.0"/>
<circle cx="613.3" cy="346.1" r="2.0"/>
<circle cx="613.0" cy="354.7" r="2.0"/>
<circle cx="624.6" cy="363.0" r="2.0"/>
<circle cx="626.1" cy="368.3" r="2.0"/>
<circle cx="602.0" cy="374.8" r="2.0"/>
<circle cx="591.8" cy="401.3" r="2.0"/>
<circle cx="560.7" cy="402.9" r="2.0"/>
<circle cx="615.1" cy="402.9" r="2.0"/>
<circle cx="578.4" cy="426.9" r="2.0"/>
<circle cx="625.8" cy="427.1" r="2.0"/>
<circle cx="631.2" cy="428.3" r="2.0"/>
<circle cx="598.2" cy="447.3" r="2.0"/>
<circle cx="617.5" cy="463.2" r="2.0"/>
<circle cx="585.1" cy="504.3" r="2.0"/>
<circle cx="603.2" cy="525.7" r="2.0"/>
<circle cx="596.2" cy="527.2" r="2.0"/>
<circle cx="578.8" cy="528.2" r="2.0"/>
<circle cx="612.6" cy="529.7" r="2.0"/>
<circle cx="596.2" cy="538.1" r="2.0"/>
<circle cx="583.6" cy="542.2" r="2.0"/>
<circle cx="604.0" cy="543.4" r="2.0"/>
<circle cx="566.9" cy="547.4" r="2.0"/>
<circle cx="564.4" cy="547.9" r="2.0"/>
<circle cx="587.6" cy="547.9" r="2.0"/>
<circle cx="603.4" cy="547.0" r="2.0"/>
<circle cx="584.3" cy="550.4" r="2.0"/>
<circle cx="605.3" cy="561.0" r="2.0"/>
<circle cx="588.8" cy="562.9" r="2.0"/>
<circle cx="563.9" cy="564.7" r="2.0"/>
<circle cx="580.0" cy="569.6" r="2.0"/>
<circle cx="601.6" cy="570.7" r="2.0"/>
<circle cx="589.8" cy="574.4" r="2.0"/>
<circle cx="605.1" cy="577.9" r="2.0"/>
<circle cx="615.1" cy="579.9" r="2.0"/>
<circle cx="596.2" cy="580.2" r="2.0"/>
<circle cx="601.7" cy="586.4" r="2.0"/>
<circle cx="595.3" cy="588.2" r="2.0"/>
</g>
<rect x="559.5" y="315.5" width="89" height="287" fill="none" stroke="#262626" stroke-width="1" shape-rendering="crispEdges"/>
<rect x="665.5" y="315.5" width="88" height="287" fill="#fff" stroke="none"/>
<path d="M666 597.5h2.2M753 597.5h-2.2M666 562.5h2.2M753 562.5h-2.2M666 528.5h2.2M753 528.5h-2.2M666 493.5h2.2M753 493.5h-2.2M666 458.5h2.2M753 458.5h-2.2M666 424.5h2.2M753 424.5h-2.2M666 389.5h2.2M753 389.5h-2.2M666 355.5h2.2M753 355.5h-2.2M666 320.5h2.2M753 320.5h-2.2M666.5 316v2.2M666.5 602v-2.2M700.5 316v2.2M700.5 602v-2.2M735.5 316v2.2M735.5 602v-2.2" stroke="#262626" stroke-width="1" fill="none"/>
<clipPath id="cp3"><rect x="665.5" y="315.5" width="88" height="287"/></clipPath><g clip-path="url(#cp3)" fill="#0072bd">
<circle cx="686.3" cy="322.3" r="2.0"/>
<circle cx="738.1" cy="324.1" r="2.0"/>
<circle cx="684.7" cy="338.0" r="2.0"/>
<circle cx="689.3" cy="346.1" r="2.0"/>
<circle cx="695.4" cy="354.7" r="2.0"/>
<circle cx="747.8" cy="363.0" r="2.0"/>
<circle cx="744.4" cy="368.3" r="2.0"/>
<circle cx="701.2" cy="374.8" r="2.0"/>
<circle cx="686.3" cy="401.3" r="2.0"/>
<circle cx="678.9" cy="402.9" r="2.0"/>
<circle cx="722.9" cy="402.9" r="2.0"/>
<circle cx="708.4" cy="426.9" r="2.0"/>
<circle cx="749.1" cy="427.1" r="2.0"/>
<circle cx="693.6" cy="428.3" r="2.0"/>
<circle cx="719.7" cy="447.3" r="2.0"/>
<circle cx="712.8" cy="463.2" r="2.0"/>
<circle cx="742.0" cy="504.3" r="2.0"/>
<circle cx="742.0" cy="525.7" r="2.0"/>
<circle cx="683.5" cy="527.2" r="2.0"/>
<circle cx="745.3" cy="528.2" r="2.0"/>
<circle cx="681.7" cy="529.7" r="2.0"/>
<circle cx="683.8" cy="538.1" r="2.0"/>
<circle cx="702.3" cy="542.2" r="2.0"/>
<circle cx="736.8" cy="543.4" r="2.0"/>
<circle cx="734.7" cy="547.0" r="2.0"/>
<circle cx="740.7" cy="547.4" r="2.0"/>
<circle cx="685.7" cy="547.9" r="2.0"/>
<circle cx="717.4" cy="547.9" r="2.0"/>
<circle cx="744.7" cy="550.4" r="2.0"/>
<circle cx="681.0" cy="561.0" r="2.0"/>
<circle cx="693.8" cy="562.9" r="2.0"/>
<circle cx="703.6" cy="564.7" r="2.0"/>
<circle cx="712.8" cy="569.6" r="2.0"/>
<circle cx="714.8" cy="570.7" r="2.0"/>
<circle cx="706.1" cy="574.4" r="2.0"/>
<circle cx="675.6" cy="577.9" r="2.0"/>
<circle cx="705.7" cy="579.9" r="2.0"/>
<circle cx="707.5" cy="580.2" r="2.0"/>
<circle cx="689.2" cy="586.4" r="2.0"/>
<circle cx="695.1" cy="588.2" r="2.0"/>
</g>
<rect x="665.5" y="315.5" width="88" height="287" fill="none" stroke="#262626" stroke-width="1" shape-rendering="crispEdges"/>
<rect x="794.5" y="315.5" width="100" height="287" fill="#fff" stroke="none"/>
<rect x="794.5" y="320.5" width="38.0" height="55.0" fill="#66aad7" stroke="#111" stroke-width="1" shape-rendering="crispEdges"/>
<rect x="794.5" y="375.5" width="28.0" height="56.0" fill="#66aad7" stroke="#111" stroke-width="1" shape-rendering="crispEdges"/>
<rect x="794.5" y="431.5" width="9.0" height="55.0" fill="#66aad7" stroke="#111" stroke-width="1" shape-rendering="crispEdges"/>
<rect x="794.5" y="486.5" width="28.0" height="56.0" fill="#66aad7" stroke="#111" stroke-width="1" shape-rendering="crispEdges"/>
<rect x="794.5" y="542.5" width="86.0" height="55.0" fill="#66aad7" stroke="#111" stroke-width="1" shape-rendering="crispEdges"/>
<path d="M795 597.5h2.2M894 597.5h-2.2M795 562.5h2.2M894 562.5h-2.2M795 528.5h2.2M894 528.5h-2.2M795 493.5h2.2M894 493.5h-2.2M795 458.5h2.2M894 458.5h-2.2M795 424.5h2.2M894 424.5h-2.2M795 389.5h2.2M894 389.5h-2.2M795 355.5h2.2M894 355.5h-2.2M795 320.5h2.2M894 320.5h-2.2M794.5 316v2.2M794.5 602v-2.2M890.5 316v2.2M890.5 602v-2.2" stroke="#262626" stroke-width="1" fill="none"/>
<rect x="794.5" y="315.5" width="100" height="287" fill="none" stroke="#262626" stroke-width="1" shape-rendering="crispEdges"/>
<rect x="794" y="321" width="1" height="276" fill="#0f5481" shape-rendering="crispEdges"/>
<rect x="794" y="375.0" width="1" height="1" fill="#111" shape-rendering="crispEdges"/>
<rect x="794" y="431.0" width="1" height="1" fill="#111" shape-rendering="crispEdges"/>
<rect x="794" y="486.0" width="1" height="1" fill="#111" shape-rendering="crispEdges"/>
<rect x="794" y="542.0" width="1" height="1" fill="#111" shape-rendering="crispEdges"/>
</svg>
<div style="position:absolute;top:589.48px;height:19px;line-height:19px;font-size:13.33px;color:#262626;white-space:pre;right:622.80px;transform-origin:100% 50%;">0</div>
<div style="position:absolute;top:589.48px;height:19px;line-height:19px;font-size:13.33px;color:#262626;white-space:pre;left:759.60px;transform-origin:0 50%;">0</div>
<div style="position:absolute;top:554.88px;height:19px;line-height:19px;font-size:13.33px;color:#262626;white-space:pre;right:622.80px;transform-origin:100% 50%;">500</div>
<div style="position:absolute;top:554.88px;height:19px;line-height:19px;font-size:13.33px;color:#262626;white-space:pre;left:759.60px;transform-origin:0 50%;">500</div>
<div style="position:absolute;top:520.28px;height:19px;line-height:19px;font-size:13.33px;color:#262626;white-space:pre;right:622.80px;transform-origin:100% 50%;">1000</div>
<div style="position:absolute;top:520.28px;height:19px;line-height:19px;font-size:13.33px;color:#262626;white-space:pre;left:759.60px;transform-origin:0 50%;">1000</div>
<div style="position:absolute;top:485.68px;height:19px;line-height:19px;font-size:13.33px;color:#262626;white-space:pre;right:622.80px;transform-origin:100% 50%;">1500</div>
<div style="position:absolute;top:485.68px;height:19px;line-height:19px;font-size:13.33px;color:#262626;white-space:pre;left:759.60px;transform-origin:0 50%;">1500</div>
<div style="position:absolute;top:451.08px;height:19px;line-height:19px;font-size:13.33px;color:#262626;white-space:pre;right:622.80px;transform-origin:100% 50%;">2000</div>
<div style="position:absolute;top:451.08px;height:19px;line-height:19px;font-size:13.33px;color:#262626;white-space:pre;left:759.60px;transform-origin:0 50%;">2000</div>
<div style="position:absolute;top:416.48px;height:19px;line-height:19px;font-size:13.33px;color:#262626;white-space:pre;right:622.80px;transform-origin:100% 50%;">2500</div>
<div style="position:absolute;top:416.48px;height:19px;line-height:19px;font-size:13.33px;color:#262626;white-space:pre;left:759.60px;transform-origin:0 50%;">2500</div>
<div style="position:absolute;top:381.88px;height:19px;line-height:19px;font-size:13.33px;color:#262626;white-space:pre;right:622.80px;transform-origin:100% 50%;">3000</div>
<div style="position:absolute;top:381.88px;height:19px;line-height:19px;font-size:13.33px;color:#262626;white-space:pre;left:759.60px;transform-origin:0 50%;">3000</div>
<div style="position:absolute;top:347.28px;height:19px;line-height:19px;font-size:13.33px;color:#262626;white-space:pre;right:622.80px;transform-origin:100% 50%;">3500</div>
<div style="position:absolute;top:347.28px;height:19px;line-height:19px;font-size:13.33px;color:#262626;white-space:pre;left:759.60px;transform-origin:0 50%;">3500</div>
<div style="position:absolute;top:312.68px;height:19px;line-height:19px;font-size:13.33px;color:#262626;white-space:pre;right:622.80px;transform-origin:100% 50%;">4000</div>
<div style="position:absolute;top:312.68px;height:19px;line-height:19px;font-size:13.33px;color:#262626;white-space:pre;left:759.60px;transform-origin:0 50%;">4000</div>
<div style="position:absolute;top:607.78px;height:19px;line-height:19px;font-size:13.33px;color:#262626;white-space:pre;left:377.19px;transform-origin:0 50%;">5</div>
<div style="position:absolute;top:607.78px;height:19px;line-height:19px;font-size:13.33px;color:#262626;white-space:pre;left:428.39px;transform-origin:0 50%;">10</div>
<div style="position:absolute;top:607.78px;height:19px;line-height:19px;font-size:13.33px;color:#262626;white-space:pre;left:447.03px;transform-origin:0 50%;">0.6</div>
<div style="position:absolute;top:607.78px;height:19px;line-height:19px;font-size:13.33px;color:#262626;white-space:pre;left:489.73px;transform-origin:0 50%;">0.8</div>
<div style="position:absolute;top:607.78px;height:19px;line-height:19px;font-size:13.33px;color:#262626;white-space:pre;left:536.89px;transform-origin:0 50%;">1</div>
<div style="position:absolute;top:607.78px;height:19px;line-height:19px;font-size:13.33px;color:#262626;white-space:pre;left:562.09px;transform-origin:0 50%;">10</div>
<div style="position:absolute;top:607.78px;height:19px;line-height:19px;font-size:13.33px;color:#262626;white-space:pre;left:593.19px;transform-origin:0 50%;">15</div>
<div style="position:absolute;top:607.78px;height:19px;line-height:19px;font-size:13.33px;color:#262626;white-space:pre;left:622.69px;transform-origin:0 50%;">20</div>
<div style="position:absolute;top:607.78px;height:19px;line-height:19px;font-size:13.33px;color:#262626;white-space:pre;left:662.99px;transform-origin:0 50%;">0</div>
<div style="position:absolute;top:607.78px;height:19px;line-height:19px;font-size:13.33px;color:#262626;white-space:pre;left:688.03px;transform-origin:0 50%;">0.02</div>
<div style="position:absolute;top:607.78px;height:19px;line-height:19px;font-size:13.33px;color:#262626;white-space:pre;left:722.13px;transform-origin:0 50%;">0.04</div>
<div style="position:absolute;top:607.78px;height:19px;line-height:19px;font-size:13.33px;color:#262626;white-space:pre;left:790.09px;transform-origin:0 50%;">0</div>
<div style="position:absolute;top:607.78px;height:19px;line-height:19px;font-size:13.33px;color:#262626;white-space:pre;left:881.03px;transform-origin:0 50%;">0.5</div>
<div style="position:absolute;left:257px;top:288px;width:705px;height:354px;overflow:hidden;">
<div style="position:absolute;top:339.28px;height:19px;line-height:19px;font-size:13.33px;color:#262626;white-space:pre;font-weight:bold;left:118.71px;transform-origin:0 50%;">Delay</div>
<div style="position:absolute;top:339.28px;height:19px;line-height:19px;font-size:13.33px;color:#262626;white-space:pre;font-weight:bold;left:226.69px;transform-origin:0 50%;">Gain</div>
<div style="position:absolute;top:339.28px;height:19px;line-height:19px;font-size:13.33px;color:#262626;white-space:pre;font-weight:bold;left:339.22px;transform-origin:0 50%;">Tc</div>
<div style="position:absolute;top:339.28px;height:19px;line-height:19px;font-size:13.33px;color:#262626;white-space:pre;font-weight:bold;left:444.36px;transform-origin:0 50%;">Tp</div>
<div style="position:absolute;top:343.38px;height:19px;line-height:19px;font-size:13.33px;color:#262626;white-space:pre;left:156.60px;transform-origin:0 50%;">10</div>
<div style="position:absolute;top:340.79px;height:15px;line-height:15px;font-size:10.7px;color:#262626;white-space:pre;left:171.60px;transform-origin:0 50%;">-3</div>
</div>
<div style="position:absolute;left:307px;top:459.5px;width:0;height:0;"><div style="position:absolute;left:-49.25px;top:-14.12px;height:19px;line-height:19px;font-size:13.33px;font-weight:bold;color:#262626;white-space:pre;transform:rotate(-90deg);transform-origin:49.25px 14.12px;">SignalMatching</div></div>
</body></html>
